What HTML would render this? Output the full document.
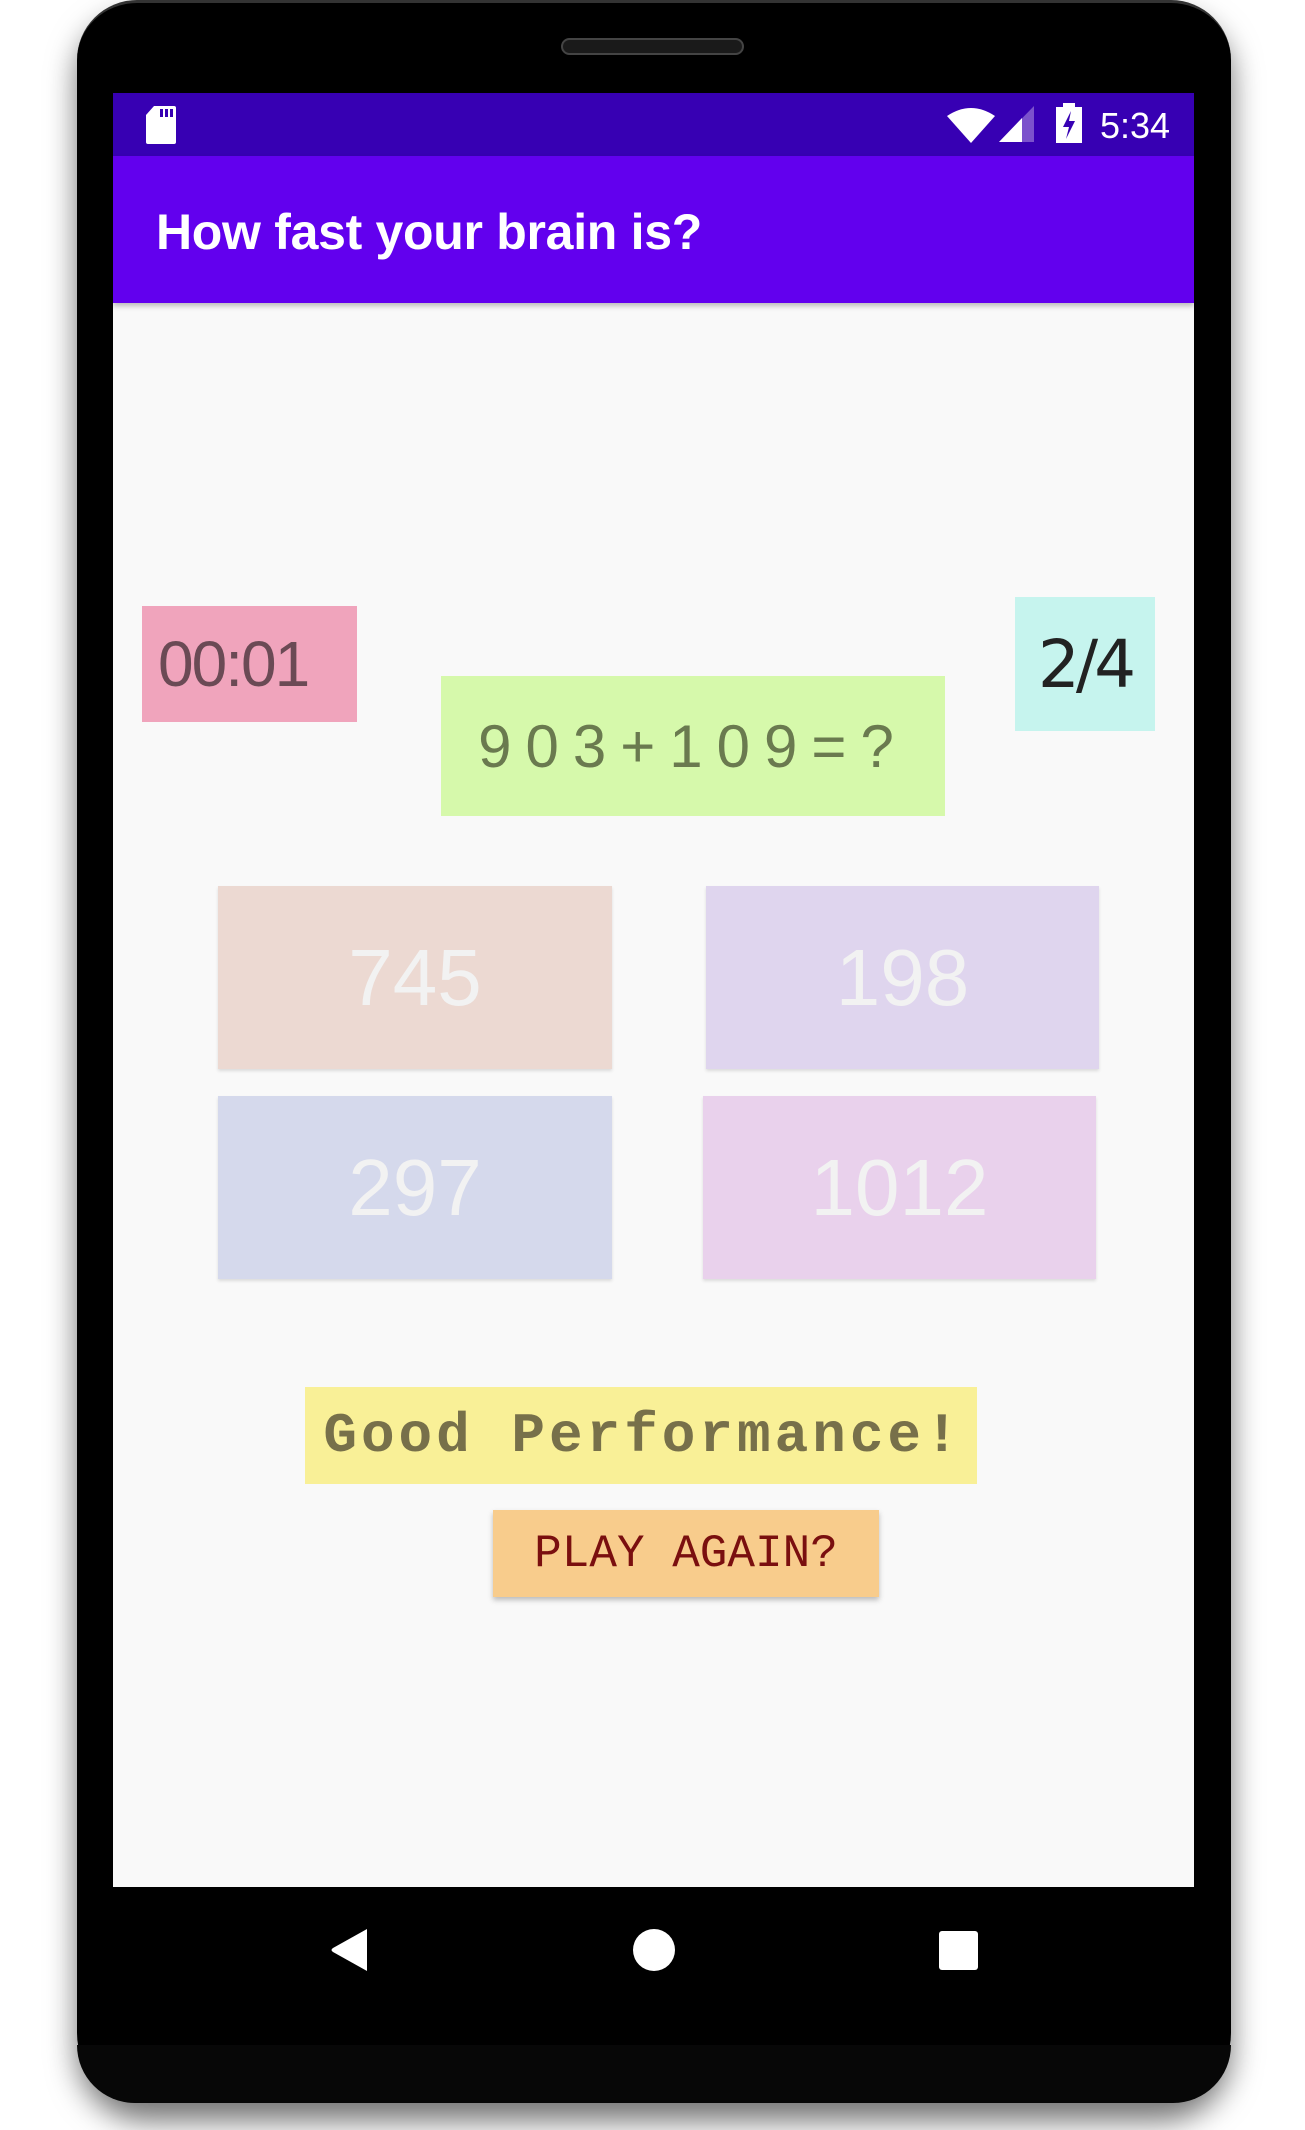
<!DOCTYPE html>
<html><head><meta charset="utf-8"><style>
*{margin:0;padding:0;box-sizing:border-box}
body{width:1305px;height:2130px;background:#fff;position:relative;overflow:hidden;font-family:"Liberation Sans",sans-serif}
.a{position:absolute}
.phone{left:77px;top:0;width:1154px;height:2103px;background:#000;border-radius:60px 60px 70px 70px;box-shadow:0 18px 30px rgba(0,0,0,.55);border-top:3px solid #333}
.box{position:absolute;display:flex;align-items:center;justify-content:center}
.ans{color:#f2f2f2;font-size:80px;box-shadow:0 2px 3px rgba(0,0,0,.12)}
</style></head><body>
<div class="a phone"></div>
<div class="a" style="left:77px;top:2045px;width:1154px;height:58px;background:#070707;border-radius:0 0 70px 70px"></div>
<div class="a" style="left:561px;top:38px;width:183px;height:17px;border-radius:9px;background:#1a1a1a;border:2px solid #444"></div>
<div class="a" style="left:113px;top:93px;width:1081px;height:1794px;background:#f9f9f9"></div>
<div class="a" style="left:113px;top:93px;width:1081px;height:63px;background:#3700b3"></div>
<div class="a" style="left:113px;top:156px;width:1081px;height:147px;background:#6200ee;box-shadow:0 3px 5px rgba(0,0,0,.25)"></div>
<svg class="a" style="left:146px;top:106px" width="30" height="38" viewBox="0 0 30 38"><path d="M8 0H28a2 2 0 0 1 2 2V36a2 2 0 0 1-2 2H2a2 2 0 0 1-2-2V9Z" fill="#fff"/><rect x="14" y="3" width="3" height="8" fill="#3700b3"/><rect x="19" y="3" width="3" height="8" fill="#3700b3"/><rect x="24" y="3" width="3" height="8" fill="#3700b3"/></svg>
<svg class="a" style="left:946px;top:106px" width="50" height="38" viewBox="0 0 50 38"><path d="M1 10Q25 -6 49 10L25 37Z" fill="#fff"/></svg>
<svg class="a" style="left:998px;top:105px" width="38" height="38" viewBox="0 0 38 38"><path d="M36 1V37H1Z" fill="#7b52cc"/><path d="M24 13V37H1Z" fill="#fff"/></svg>
<svg class="a" style="left:1056px;top:103px" width="26" height="40" viewBox="0 0 26 40"><rect x="7" y="0" width="12" height="4" fill="#fff"/><rect x="0" y="4" width="26" height="36" fill="#fff"/><path d="M15 8L7 24H13L10 36L19 18H13Z" fill="#3700b3"/></svg>
<div class="a" style="left:1100px;top:105px;font-size:36px;color:#fff">5:34</div>
<div class="a" style="left:156px;top:203px;font-size:50px;color:#fff;font-weight:bold;letter-spacing:-0.3px">How fast your brain is?</div>

<div class="box" style="left:142px;top:606px;width:215px;height:116px;background:#f0a4bc;justify-content:flex-start;padding-left:16px;font-size:64px;color:#6b4a55;letter-spacing:-2px">00:01</div>
<div class="box" style="left:1015px;top:597px;width:140px;height:134px;background:#c6f4ee;font-size:66px;color:#222;font-family:'DejaVu Sans',sans-serif;letter-spacing:-4px">2/4</div>
<div class="box" style="left:441px;top:676px;width:504px;height:140px;background:#d6f9ab;font-size:60px;color:#6a7a4f;letter-spacing:14px;font-weight:300;padding-left:0px">903+109=?</div>

<div class="box ans" style="left:218px;top:886px;width:394px;height:183px;background:#ecd9d2">745</div>
<div class="box ans" style="left:706px;top:886px;width:393px;height:183px;background:#dfd5ee">198</div>
<div class="box ans" style="left:218px;top:1096px;width:394px;height:183px;background:#d5d9ec">297</div>
<div class="box ans" style="left:703px;top:1096px;width:393px;height:183px;background:#e9d1ec">1012</div>

<div class="box" style="left:305px;top:1387px;width:672px;height:97px;background:#f9f097;font-family:'Liberation Mono',monospace;font-weight:bold;font-size:56px;color:#77704a;letter-spacing:4px;padding-left:4px">Good Performance!</div>
<div class="box" style="left:493px;top:1510px;width:386px;height:87px;background:#f8cc8c;font-family:'Liberation Mono',monospace;font-size:46px;color:#7a0f0f;box-shadow:0 3px 5px rgba(0,0,0,.25)">PLAY AGAIN?</div>

<svg class="a" style="left:330px;top:1928px" width="40" height="44" viewBox="0 0 40 44"><path d="M37 1V43L3 24Q0 22 3 20Z" fill="#fff"/></svg>
<div class="a" style="left:633px;top:1929px;width:42px;height:42px;border-radius:50%;background:#fff"></div>
<div class="a" style="left:939px;top:1931px;width:39px;height:39px;border-radius:3px;background:#fff"></div>
</body></html>
